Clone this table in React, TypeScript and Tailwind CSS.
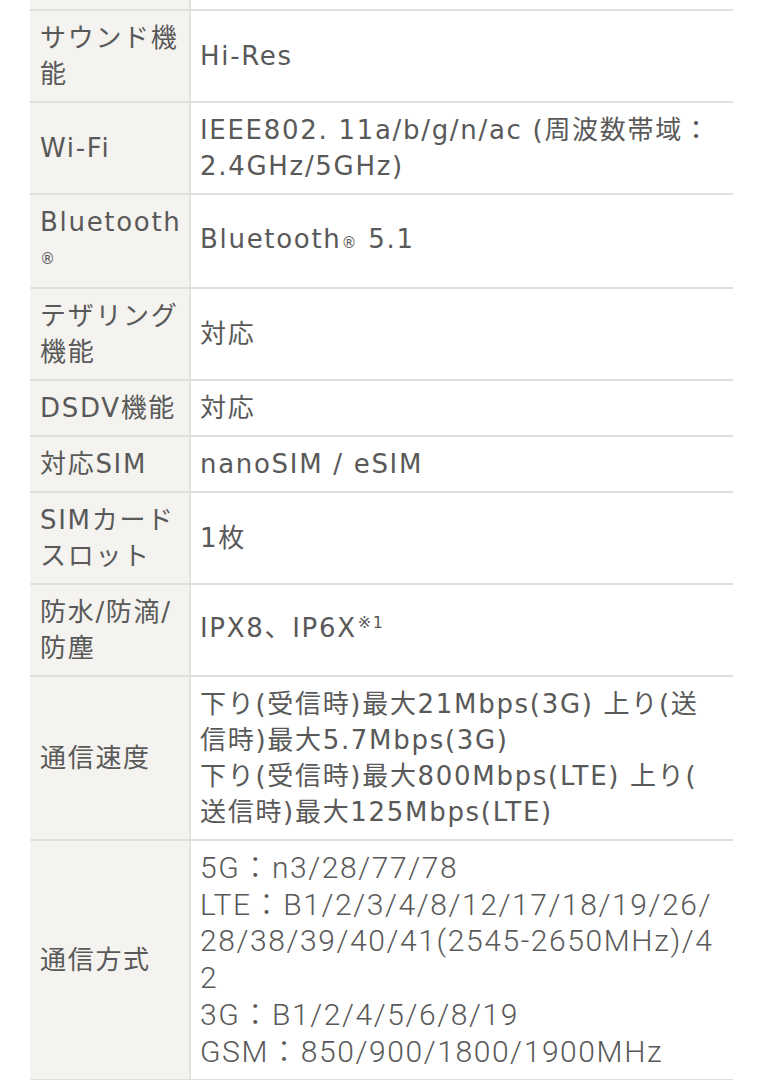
import React from "react";

type Row = { label: React.ReactNode; value: React.ReactNode; last?: boolean };

const rows: Row[] = [
  {
    label: (
      <>
        サウンド機
        <br />能
      </>
    ),
    value: "Hi-Res",
  },
  {
    label: "Wi-Fi",
    value: (
      <>
        IEEE802. 11a/b/g/n/ac (周波数帯域：
        <br />
        2.4GHz/5GHz)
      </>
    ),
  },
  {
    label: (
      <>
        <div>Bluetooth</div>
        <div className="text-[15px] leading-[38px]">®</div>
      </>
    ),
    value: (
      <>
        Bluetooth<span className="text-[15px]">®</span> 5.1
      </>
    ),
  },
  {
    label: (
      <>
        テザリング
        <br />
        機能
      </>
    ),
    value: "対応",
  },
  { label: "DSDV機能", value: "対応" },
  { label: "対応SIM", value: "nanoSIM / eSIM" },
  {
    label: (
      <>
        SIMカード
        <br />
        スロット
      </>
    ),
    value: "1枚",
  },
  {
    label: (
      <>
        防水/防滴/
        <br />
        防塵
      </>
    ),
    value: (
      <>
        IPX8、IP6X
        <span className="text-[16px] relative -top-[9px] ml-[1px]">※1</span>
      </>
    ),
  },
  {
    label: "通信速度",
    value: (
      <>
        下り(受信時)最大21Mbps(3G) 上り(送
        <br />
        信時)最大5.7Mbps(3G)
        <br />
        下り(受信時)最大800Mbps(LTE) 上り(
        <br />
        送信時)最大125Mbps(LTE)
      </>
    ),
  },
  {
    label: "通信方式",
    last: true,
    value: (
      <>
        5G：n3/28/77/78
        <br />
        LTE：B1/2/3/4/8/12/17/18/19/26/
        <br />
        28/38/39/40/41(2545-2650MHz)/4
        <br />
        2
        <br />
        3G：B1/2/4/5/6/8/19
        <br />
        GSM：850/900/1800/1900MHz
      </>
    ),
  },
];

export default function App() {
  return (
    <div className="w-[763px] h-[1080px] bg-white overflow-hidden">
      <div className="ml-[30px] w-[703px] text-[#595959] text-[26px] font-normal tracking-[1.7px] leading-[36px] [font-family:'DejaVu_Sans','Noto_Sans_CJK_JP',sans-serif]">
        <div className="flex border-b-2 border-[#e0dfdc]">
          <div className="w-[161px] h-[9px] bg-[#f4f3ef] border-r-2 border-[#e3e2de]" />
          <div className="flex-1" />
        </div>
        {rows.map((r, i) => (
          <div key={i} className="flex border-b-2 border-[#e0dfdc]">
            <div className="w-[161px] shrink-0 bg-[#f4f3ef] border-r-2 border-[#e3e2de] pl-[10px] py-[9px] flex items-center whitespace-nowrap">
              <div>{r.label}</div>
            </div>
            <div
              className={
                "flex-1 pl-[9px] py-[9px] flex items-center whitespace-nowrap " +
                (r.last
                  ? "[font-family:Roboto,'Noto_Sans_CJK_JP',sans-serif] font-light text-[30px] leading-[36.7px] tracking-[1.6px]"
                  : "")
              }
            >
              <div>{r.value}</div>
            </div>
          </div>
        ))}
      </div>
    </div>
  );
}
